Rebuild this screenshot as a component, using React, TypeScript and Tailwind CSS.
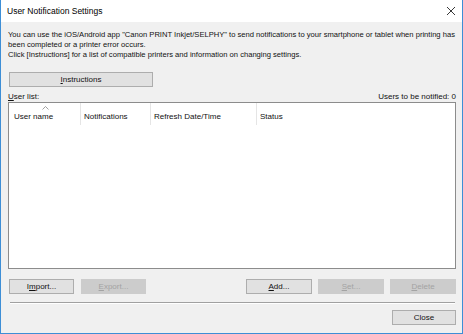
import React from "react";

const font = { fontFamily: '"Liberation Sans", Arial, sans-serif' };

function Btn({ label, u, disabled, className }: { label: string; u: number; disabled?: boolean; className: string }) {
  const chars = label.split("");
  return (
    <div
      className={
        "flex items-center justify-center text-[8px] leading-none shrink-0 " +
        (disabled
          ? "bg-[#cccccc] text-[#a3a3a3] border border-[#cccccc] "
          : "bg-[#e1e1e1] text-[#111] border border-[#adadad] ") +
        className
      }
    >
      {chars.map((c, i) => (
        <span key={i} className={i === u ? "underline underline-offset-[1px]" : ""}>
          {c}
        </span>
      ))}
    </div>
  );
}

export default function App() {
  return (
    <div
      style={font}
      className="w-[463px] h-[334px] overflow-hidden flex flex-col border-l border-r border-b border-[#3d8ed6] bg-[#f0f0f0] text-[#111]"
    >
      <div className="h-[22px] bg-white flex items-center justify-between pl-[6px] pr-[6px] shrink-0">
        <span className="text-[8.5px] text-black">User Notification Settings</span>
        <svg width="10" height="10" viewBox="0 0 10 10">
          <path d="M1 1 L9 9 M9 1 L1 9" stroke="#222" strokeWidth="0.9" />
        </svg>
      </div>
      <div className="flex-1 flex flex-col pl-[7px] pr-[6px]">
        <div className="mt-[8px] h-[30px] text-[7.6px] leading-[10px] whitespace-nowrap">
          <div>You can use the iOS/Android app "Canon PRINT Inkjet/SELPHY" to send notifications to your smartphone or tablet when printing has</div>
          <div>been completed or a printer error occurs.</div>
          <div>Click [Instructions] for a list of compatible printers and information on changing settings.</div>
        </div>
        <Btn label="Instructions" u={0} className="mt-[12px] ml-[1px] w-[144px] h-[15px]" />
        <div className="mt-[5px] h-[10px] flex justify-between items-center text-[8px] leading-none">
          <span>
            <span className="underline underline-offset-[1px]">U</span>ser list:
          </span>
          <span>Users to be notified: 0</span>
        </div>
        <div className="h-[167px] shrink-0 bg-white border border-[#8c8c8c] flex flex-col">
          <div className="h-[22px] flex text-[8px] leading-none">
            <div className="relative w-[72px] border-r border-[#e5e5e5] flex items-center pl-[5px] pt-[5px]">
              User name
              <svg className="absolute left-[33px] top-[3px]" width="7" height="4" viewBox="0 0 7 4">
                <path d="M0.5 3.5 L3.5 0.5 L6.5 3.5" stroke="#888" strokeWidth="0.8" fill="none" />
              </svg>
            </div>
            <div className="w-[70px] border-r border-[#e5e5e5] flex items-center pl-[3px] pt-[5px]">Notifications</div>
            <div className="w-[106px] border-r border-[#e5e5e5] flex items-center pl-[3px] pt-[5px]">Refresh Date/Time</div>
            <div className="flex-1 flex items-center pl-[3px] pt-[5px]">Status</div>
          </div>
        </div>
        <div className="mt-[10px] flex h-[15px] shrink-0">
          <Btn label="Import..." u={1} className="ml-[1px] w-[65px]" />
          <Btn label="Export..." u={0} disabled className="ml-[7px] w-[65px]" />
          <div className="flex-1" />
          <Btn label="Add..." u={0} className="w-[66px]" />
          <Btn label="Set..." u={0} disabled className="ml-[6px] w-[66px]" />
          <Btn label="Delete" u={0} disabled className="ml-[6px] w-[66px]" />
        </div>
        <div className="mt-[8px] ml-[2px] mr-[1px] h-[2px] shrink-0 border-t border-[#a0a0a0] border-b border-b-white" />
        <div className="mt-[6px] flex justify-end">
          <Btn label="Close" u={-1} className="w-[64px] h-[15px]" />
        </div>
      </div>
    </div>
  );
}
